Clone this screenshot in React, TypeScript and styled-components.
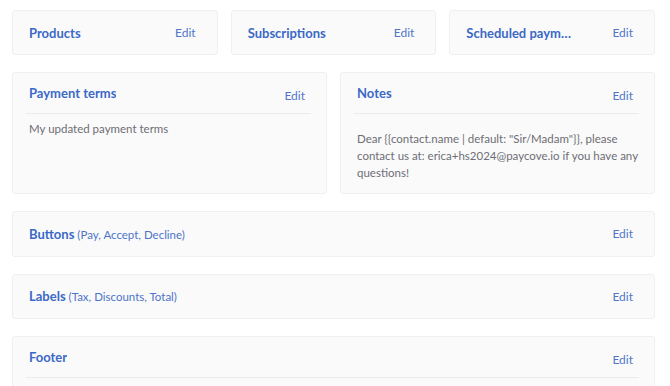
import * as React from "react"
import styled, { createGlobalStyle } from "styled-components"

const GlobalStyle = createGlobalStyle`
  body {
    margin: 0;
    background: #ffffff;
    font-family: "Lato", "Open Sans", sans-serif;
  }
`

const Page = styled.main`
  display: flex;
  flex-direction: column;
  gap: 17px;
  padding: 10px 15px 0 12px;
`

const Row = styled.div<{ $cols: number }>`
  display: grid;
  grid-template-columns: repeat(${(p) => p.$cols}, 1fr);
  gap: 13px;
`

const Card = styled.section`
  background: #fafafb;
  border: 1px solid #efeff2;
  border-radius: 3px;
  box-sizing: border-box;
  display: flex;
  flex-direction: column;
  min-width: 0;
`

const Header = styled.div<{ $tall?: boolean; $h?: number }>`
  display: flex;
  justify-content: space-between;
  align-items: ${(p) => (p.$tall ? "flex-start" : "center")};
  height: ${(p) => (p.$tall ? 40 : p.$h ?? 43)}px;
  padding: ${(p) => (p.$tall ? "11px 21px 0 16px" : "0 21px 0 16px")};
  box-sizing: border-box;
  gap: 36px;
`

const Title = styled.h2`
  margin: 0;
  font-size: 13px;
  line-height: 18px;
  font-weight: 700;
  color: #3b69c6;
  white-space: nowrap;
  overflow: hidden;
  text-overflow: ellipsis;
  min-width: 0;
`

const Hint = styled.span`
  font-weight: 400;
  font-size: 11.5px;
  color: #4d74c9;
`

const Edit = styled.button<{ $drop?: boolean }>`
  border: 0;
  background: none;
  padding: 0;
  margin-top: ${(p) => (p.$drop ? "3px" : "0")};
  font-family: inherit;
  font-size: 12px;
  line-height: 18px;
  color: #5076c9;
  cursor: pointer;
  flex-shrink: 0;
`

const Divider = styled.hr`
  border: 0;
  border-top: 1px solid #ebebef;
  margin: 0 15px 0 13px;
`

const Body = styled.div<{ $top: number }>`
  padding: ${(p) => p.$top}px 10px 12px 16px;
  font-size: 11.5px;
  line-height: 17px;
  color: #6e6e74;
  overflow: hidden;
`

const Line = styled.div`
  white-space: nowrap;
`

type Small = { title: string; hint?: string; h?: number }

const SimpleCard = ({ title, hint, h }: Small) => (
  <Card>
    <Header $h={h}>
      <Title>
        {title}
        {hint && <Hint> {hint}</Hint>}
      </Title>
      <Edit>Edit</Edit>
    </Header>
  </Card>
)

const notes = [
  'Dear {{contact.name | default: "Sir/Madam"}}, please',
  "contact us at: erica+hs2024@paycove.io if you have any",
  "questions!",
]

const App = () => {
  return (
    <>
      <GlobalStyle />
      <Page>
        <Row $cols={3}>
          <SimpleCard title="Products" />
          <SimpleCard title="Subscriptions" />
          <SimpleCard title="Scheduled payments" />
        </Row>
        <Row $cols={2}>
          <Card>
            <Header $tall>
              <Title>Payment terms</Title>
              <Edit $drop>Edit</Edit>
            </Header>
            <Divider />
            <Body $top={6}>My updated payment terms</Body>
          </Card>
          <Card>
            <Header $tall>
              <Title>Notes</Title>
              <Edit $drop>Edit</Edit>
            </Header>
            <Divider />
            <Body $top={16}>
              {notes.map((line) => (
                <Line key={line}>{line}</Line>
              ))}
            </Body>
          </Card>
        </Row>
        <SimpleCard title="Buttons" hint="(Pay, Accept, Decline)" h={44} />
        <SimpleCard title="Labels" hint="(Tax, Discounts, Total)" />
        <Card>
          <Header $tall>
            <Title>Footer</Title>
            <Edit $drop>Edit</Edit>
          </Header>
          <Divider />
          <Body $top={10}>&nbsp;</Body>
        </Card>
      </Page>
    </>
  )
}

export default App
